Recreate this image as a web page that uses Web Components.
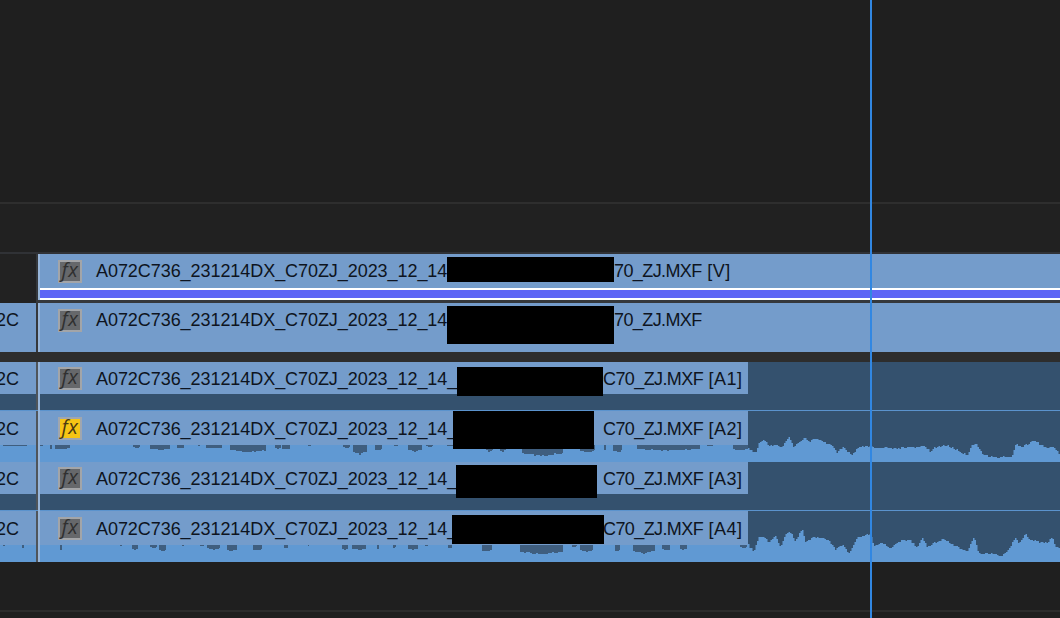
<!DOCTYPE html>
<html>
<head>
<meta charset="utf-8">
<title>Timeline</title>
<style>
  html, body { margin: 0; background: #1f1f1f; }
</style>
</head>
<body>
<nle-timeline>
  <track-row kind="video" tag=" [V]" tail="614" h="49" stripe></track-row>
  <track-row kind="video" stub="2C" tail="614" h="49"></track-row>
  <track-gap></track-gap>
  <track-row kind="audio" stub="2C" tag=" [A1]" tail="603" h="49" line></track-row>
  <track-row kind="audio" stub="2C" tag=" [A2]" tail="603" h="51" wave="a2" active></track-row>
  <track-row kind="audio" stub="2C" tag=" [A3]" tail="603" h="49" line></track-row>
  <track-row kind="audio" stub="2C" tag=" [A4]" tail="603" h="51" wave="a4"></track-row>
</nle-timeline>

<script>
// outlines were read off 3x crops, so convert them back to row coords
const fromCrop = (pts, top) => pts.map(p => [700 + p[0] / 3, 350 + p[1] / 3 - top]);

const waves = {
  a2: {
    top: 411, band: 33,
    outline: fromCrop([[144,295],[165,310],[175,280],[190,268],[205,285],[225,285],[245,292],[265,262],[280,290],[300,275],[312,260],[325,275],[345,265],[370,278],[395,285],[410,310],[425,292],[455,315],[475,292],[510,288],[520,295],[555,292],[590,296],[635,290],[650,295],[670,285],[690,305],[700,295],[735,285],[760,295],[800,315],[815,283],[830,285],[850,315],[880,322],[935,320],[945,282],[965,290],[1000,272],[1040,295],[1060,290],[1080,315]], 411),
    cuts: [[3,27,446],[40,43,446],[50,52,449],[55,70,450],[133,140,448],[150,170,450],[177,184,449],[198,200,446],[206,222,449],[230,266,453],[275,281,449],[282,290,450],[308,311,446],[343,350,448],[353,367,455],[375,382,451],[394,398,446],[408,422,452],[426,433,447],[447,453,446],[486,493,452],[500,506,452],[522,563,457],[580,595,453],[604,606,450],[613,622,453],[637,700,451],[707,713,446],[733,748,451]]
  },
  a4: {
    top: 511, band: 33,
    outline: fromCrop([[144,585],[160,605],[175,562],[190,558],[205,575],[225,558],[240,590],[258,548],[275,552],[285,575],[305,535],[315,575],[340,560],[385,570],[405,600],[425,585],[445,612],[470,565],[490,558],[510,552],[520,590],[545,578],[570,595],[600,572],[630,570],[650,595],[665,562],[680,590],[730,567],[760,585],[800,605],[820,560],[835,610],[880,612],[905,618],[930,590],[945,562],[955,580],[975,552],[990,570],[1040,580],[1055,560],[1065,590],[1080,592]], 511),
    cuts: [[3,5,546],[22,24,549],[60,62,550],[120,122,546],[132,138,550],[150,157,548],[159,166,552],[182,184,546],[200,204,546],[207,220,550],[227,237,552],[253,262,551],[284,288,549],[308,309,546],[342,348,550],[352,366,550],[377,379,550],[393,396,548],[408,418,550],[425,428,546],[448,452,549],[482,492,552],[520,563,555],[572,577,547],[580,593,552],[615,620,552],[633,655,554],[662,670,551],[680,687,550],[740,747,548]]
  }
};

// cheap repeatable noise so the outline has the blocky look of a waveform
const bump = i => (Math.sin(i * 12.9898) * 43758.5453 % 1 + 1) % 1;

function waveSvg(data, height) {
  const pts = data.outline;
  let d = `M748 ${height}`;
  let seg = 0;
  for (let x = 748, i = 0; x < 1060; x += 1.5, i++) {
    while (seg < pts.length - 2 && pts[seg + 1][0] < x) seg++;
    const a = pts[seg], b = pts[seg + 1];
    const y = a[1] + (b[1] - a[1]) * Math.min(1, (x - a[0]) / (b[0] - a[0]));
    const rough = Math.round(y + bump(i) * 1.6 - 0.8);
    d += `L${x} ${rough}L${x + 1.5} ${rough}`;
  }
  d += `L1060 ${height}Z`;

  const bandBottom = data.band + 1;
  let cuts = '';
  data.cuts.forEach((c, n) => {
    const depth = c[2] - data.top - bandBottom;
    const mid = (c[0] + c[1]) / 2, half = (c[1] - c[0]) / 2;
    for (let x = c[0], i = 0; x < c[1]; x += 2, i++) {
      const fall = 1 - Math.abs(x + 1 - mid) / (half + 1);
      const h = Math.max(1, Math.round(depth * (0.7 + 0.3 * fall) * (0.85 + bump(n * 7 + i) * 0.15)));
      cuts += `<rect x="${x}" y="${bandBottom - 1}" width="${Math.min(2, c[1] - x)}" height="${h + 1}"/>`;
    }
  });

  return `<svg class="wave" viewBox="0 0 1060 ${height}" preserveAspectRatio="none">
    <rect x="0" y="${bandBottom}" width="748" height="${height - bandBottom}" fill="#6099d3"/>
    <path fill="#6099d3" d="${d}"/>
    <g fill="#3f5e7f">${cuts}</g>
  </svg>`;
}

class FxBadge extends HTMLElement {
  constructor() {
    super();
    this.attachShadow({ mode: 'open' }).innerHTML = `
      <style>
        :host {
          display: flex; align-items: center; justify-content: center; box-sizing: border-box;
          width: 24px; height: 23px; flex: none;
          border: 2px solid #a3a5a8; background: #66686b;
          color: #303030; font: italic 400 20px/1 "Open Sans", sans-serif;
        }
        :host([on]) { background: #f6c515; border-color: #9fa6b0; color: #4a3a12; }
        span { transform: translateY(-1px); letter-spacing: 0.5px; }
      </style>
      <span>fx</span>`;
  }
}
customElements.define('fx-badge', FxBadge);

class TrackGap extends HTMLElement {
  constructor() {
    super();
    this.attachShadow({ mode: 'open' }).innerHTML = `
      <style>:host { display: block; height: 10px; background: #2d2d2d; }</style>`;
  }
}
customElements.define('track-gap', TrackGap);

class TrackRow extends HTMLElement {
  constructor() {
    super();
    const audio = this.getAttribute('kind') === 'audio';
    const stripe = this.hasAttribute('stripe');
    const active = this.hasAttribute('active');
    const waveKey = this.getAttribute('wave');
    const height = parseFloat(this.getAttribute('h'));
    const tail = parseFloat(this.getAttribute('tail'));
    const tag = this.getAttribute('tag') || '';
    // name up to the hidden part, then the end of the file name
    const head = audio ? 'A072C736_231214DX_C70ZJ_2023_12_14_' : 'A072C736_231214DX_C70ZJ_2023_12_14';
    const end = audio ? 'C70_ZJ.MXF' : '70_ZJ.MXF';

    this.attachShadow({ mode: 'open' }).innerHTML = `
      <style>
        :host {
          display: block; position: relative; height: ${height}px;
          font: 18px/1 "Liberation Sans", Arial, sans-serif; color: #0e1420;
          background: ${audio ? '#34516e' : '#749ccb'};
        }
        :host([stripe]) { background: #35383c; }
        .wave { position: absolute; inset: 0; width: 100%; height: 100%; }
        .tracks { position: relative; display: grid; grid-template-columns: 36px 2px 1fr; height: 100%; }
        .stub { overflow: hidden; }
        :host([stripe]) .stub { background: #222; }
        .rule { background: ${audio ? '#4f555b' : '#35383c'}; }
        .main { position: relative; min-width: 0; }
        .main::before { content: ""; position: absolute; left: 0; top: 0; bottom: 0; width: 2px; background: #98b6da; z-index: 1; }
        :host([stripe]) .main::before { bottom: 3px; }
        .label {
          display: flex; align-items: center; white-space: pre;
          height: ${audio && !waveKey ? 32 : 34}px; background: #749ccb;
        }
        :host([stripe]) .stub .label { display: none; }
        .stub .label { justify-content: flex-end; padding-right: 17px; }
        :host([kind="audio"]) .main .label { width: 710px; }
        .name { position: relative; top: ${audio ? 1 : 0}px; letter-spacing: -0.06px; }
        .head { flex: none; width: ${tail - 96}px; }
        .end { letter-spacing: -0.6px; }
        .tag { letter-spacing: 0.5px; }
        fx-badge { margin: 0 14px 0 20px; }
        .stripe { height: 12px; box-sizing: border-box; background: #5f66f5; border: solid #fff; border-width: 2px 0; }
        :host([stripe]) .body { height: 46px; background: #749ccb; }
        .line { position: absolute; left: 0; right: 0; bottom: 0; height: 1px; background: #5b93cd; }
      </style>
      ${waveKey ? waveSvg(waves[waveKey], height) : ''}
      <div class="tracks">
        <div class="stub"><div class="label"><span class="name">${this.getAttribute('stub') || ''}</span></div></div>
        <div class="rule"></div>
        <div class="main">
          <div class="body">
            <div class="label">
              <fx-badge ${active ? 'on' : ''}></fx-badge><span class="name head">${head}</span><span class="name end">${end}</span><span class="name tag">${tag}</span>
            </div>
            ${stripe ? '<div class="stripe"></div>' : ''}
          </div>
        </div>
      </div>
      ${this.hasAttribute('line') ? '<div class="line"></div>' : ''}`;
  }
}
customElements.define('track-row', TrackRow);

class NleTimeline extends HTMLElement {
  constructor() {
    super();
    // black bars that hide part of each clip name
    const marks = [[447,257,167,25],[447,306,167,38],[457,367,146,29],[453,411,141,38],[456,465,141,33],[452,515,152,29]];
    this.attachShadow({ mode: 'open' }).innerHTML = `
      <style>
        :host { display: block; position: relative; width: 1060px; height: 618px; overflow: hidden; background: #1f1f1f; }
        .top { height: 202px; border-bottom: 2px solid #2e2e2e; }
        .band { height: 48px; background: #212121; border-bottom: 2px solid #303236; }
        .rest { height: 48px; border-bottom: 2px solid #2c2c2c; }
        .playhead { position: absolute; left: 870px; top: 0; bottom: 0; width: 2px; background: #3187e2; z-index: 3; }
        .mark { position: absolute; background: #000; z-index: 2; }
      </style>
      <div class="top"></div>
      <div class="band"></div>
      <slot></slot>
      <div class="rest"></div>
      ${marks.map(m => `<div class="mark" style="left:${m[0]}px;top:${m[1]}px;width:${m[2]}px;height:${m[3]}px"></div>`).join('')}
      <div class="playhead"></div>`;
  }
}
customElements.define('nle-timeline', NleTimeline);
</script>
</body>
</html>
